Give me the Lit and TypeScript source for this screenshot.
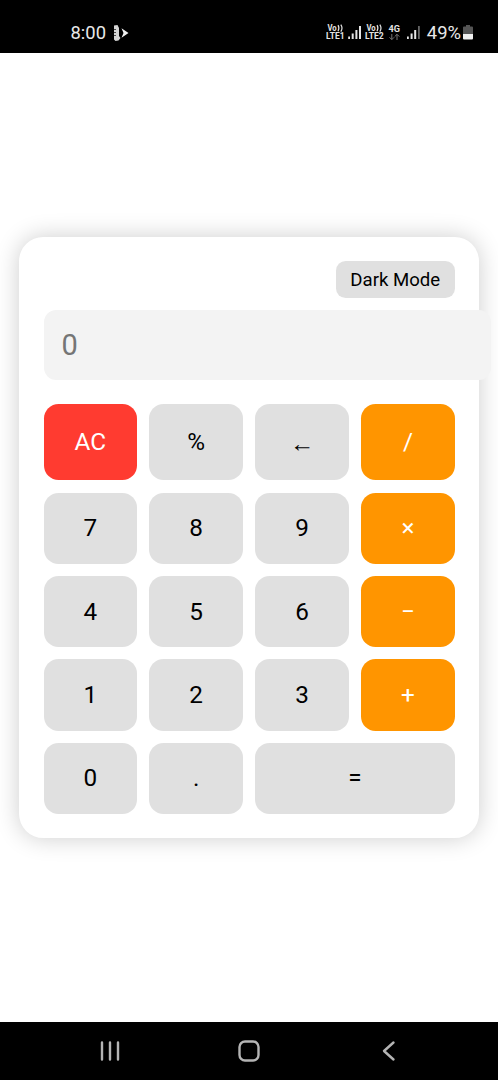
import { LitElement, html, css } from "lit";
import { customElement, state } from "lit/decorators.js";

@customElement("status-bar")
export class StatusBar extends LitElement {

  static styles = css`

    :host{
      display:flex;
      align-items:center;
      justify-content:space-between;
      box-sizing:border-box;
      height:53px;
      padding:12px 25px 0 70.5px;
      background:#000;
      color:#e8e8e8;
      font-family:Roboto,sans-serif;
      font-size:18.4px;
    }

    .side{
      display:flex;
      align-items:center;
    }

    .side svg{
      display:block;
    }

    .app{
      margin-left:7px;
    }

    .network{
      margin-right:4px;
      font-weight:700;
    }

    .battery{
      margin-left:2px;
    }

  `;

  render(){
    return html`

      <div class="side">
        <span>8:00</span>
        <svg class="app" width="16" height="18" viewBox="0 0 16 18">
          <path d="M1 1.5 4.5 1l1.500 3v8l1.500 2L5.500 16.500 2.500 17 1 15.500z" fill="#d4d4d4"/>
          <path d="M1 5.500h2M1 8.500h2M1 11.500h2" stroke="#444" stroke-width="1"/>
          <path d="M8.500 4.300 15.500 9l-7 4.700L10.500 9z" fill="#f2f2f2"/>
        </svg>
      </div>

      <div class="side">
        <svg class="network" width="97" height="18" viewBox="0 0 97 18" fill="#e4e4e4">
          <text x="1.500" y="7.200" font-size="8.500" textLength="9.200" lengthAdjust="spacingAndGlyphs">Vo</text>
          <path d="M12 1.200q1.800 2.700 0 6M14.800 0.700q2.400 3.400 0 7" fill="none" stroke="#e4e4e4" stroke-width="1.200"/>
          <text x="0" y="15.200" font-size="8.500" textLength="18.500" lengthAdjust="spacingAndGlyphs">LTE1</text>
          <path d="M22.200 12.500H24V15h-1.800zM25.700 9.500h2V15h-2zM29.400 6h2v9h-2zM33 2h2v13h-2z"/>
          <text x="40.500" y="7.200" font-size="8.500" textLength="9.200" lengthAdjust="spacingAndGlyphs">Vo</text>
          <path d="M51 1.200q1.800 2.700 0 6M53.800 0.700q2.400 3.400 0 7" fill="none" stroke="#e4e4e4" stroke-width="1.200"/>
          <text x="39" y="15.200" font-size="8.500" textLength="18.800" lengthAdjust="spacingAndGlyphs">LTE2</text>
          <text x="62.500" y="8" font-size="9" textLength="11.500" lengthAdjust="spacingAndGlyphs">4G</text>
          <path d="M65.800 10v5.500M63.500 13.300l2.300 2.300 2.300-2.300M71 16v-5.500M68.700 12.600 71 10.300l2.300 2.300" fill="none" stroke="#777" stroke-width="1"/>
          <path d="M81 12.500h1.800V15H81zM84.600 9.500h2V15h-2zM88.200 6h2v9h-2z"/>
          <path d="M92 2h1.800v13H92z" fill="#666"/>
        </svg>
        <span>49%</span>
        <svg class="battery" width="10" height="15" viewBox="0 0 10 15">
          <path d="M3 0h4v1.500h2q1 0 1 1V9H0V2.500q0-1 1-1h2z" fill="#555"/>
          <path d="M0 9h10v4.500q0 1-1 1H1q-1 0-1-1z" fill="#f0f0f0"/>
        </svg>
      </div>

    `;
  }

}

@customElement("nav-bar")
export class NavBar extends LitElement {

  static styles = css`

    :host{
      display:flex;
      align-items:center;
      justify-content:space-between;
      box-sizing:border-box;
      height:58px;
      padding:0 98px;
      background:#000;
    }

    svg{
      display:block;
      width:24px;
      height:24px;
      fill:none;
      stroke:#b4b4b4;
      stroke-width:2.4;
      stroke-linecap:round;
      stroke-linejoin:round;
    }

  `;

  render(){
    return html`

      <svg viewBox="0 0 24 24"><path d="M4 3.500v17M12 3.500v17M20 3.500v17"/></svg>
      <svg viewBox="0 0 24 24"><rect x="2.500" y="2.500" width="19" height="19" rx="5.500"/></svg>
      <svg viewBox="0 0 24 24"><path d="M17.500 3.500 8 12l9.500 8.500"/></svg>

    `;
  }

}

const keys = [
  { label: "AC", type: "clear" },
  { label: "%", type: "" },
  { label: "←", type: "arrow" },
  { label: "/", type: "operator" },
  { label: "7", type: "" },
  { label: "8", type: "" },
  { label: "9", type: "" },
  { label: "×", type: "operator" },
  { label: "4", type: "" },
  { label: "5", type: "" },
  { label: "6", type: "" },
  { label: "−", type: "operator" },
  { label: "1", type: "" },
  { label: "2", type: "" },
  { label: "3", type: "" },
  { label: "+", type: "operator" },
  { label: "0", type: "" },
  { label: ".", type: "" },
  { label: "=", type: "equal" }
];

@customElement("app-root")
export class AppRoot extends LitElement {

  static styles = css`

    :host{
      display:flex;
      flex-direction:column;
      height:100vh;
      overflow:hidden;
      background:#fff;
      font-family:Roboto,sans-serif;
    }

    main{
      flex:1;
      display:flex;
      align-items:center;
      justify-content:center;
      padding-left:0.6px;
    }

    .calculator{
      box-sizing:border-box;
      width:460px;
      padding:24.3px;
      border-radius:24.3px;
      background:#fff;
      box-shadow:0 0 24px rgba(0,0,0,0.2);
    }

    button{
      border:none;
      padding:0;
      font-family:inherit;
      color:#000;
      background:#e0e0e0;
    }

    .theme{
      display:block;
      width:119.5px;
      height:36.7px;
      margin:0 0 12.2px auto;
      padding-top:1px;
      border-radius:9.7px;
      font-size:18.6px;
    }

    input{
      display:block;
      box-sizing:border-box;
      width:447.5px;
      height:70px;
      margin-bottom:24.3px;
      padding:0 17.8px;
      border:none;
      border-radius:12.2px;
      outline:none;
      background:#f3f3f3;
      color:#000;
      font-family:inherit;
      font-size:29px;
    }

    input::placeholder{
      color:#757575;
    }

    .keys{
      display:grid;
      grid-template-columns:repeat(4,1fr);
      grid-template-rows:76.2px repeat(4,71.2px);
      gap:12.2px;
    }

    .keys button{
      padding:0 0.4px 1px 0;
      border-radius:14.6px;
      font-size:24.3px;
    }

    .keys .clear{
      background:#ff3b30;
      color:#fff;
    }

    .keys .operator{
      background:#ff9500;
      color:#fff;
    }

    .keys .arrow{
      padding:3px 0 0;
      font-family:"Liberation Sans",sans-serif;
      font-size:24.3px;
    }

    .keys .equal{
      grid-column:span 2;
    }

  `;

  @state() value = "";

  press(label: string){
    if(label === "AC"){
      this.value = "";
    } else if(label === "←"){
      this.value = this.value.slice(0, -1);
    } else if(label !== "="){
      this.value += label;
    }
  }

  render(){
    return html`

      <status-bar></status-bar>
      <main>
        <div class="calculator">
          <button class="theme">Dark Mode</button>
          <input placeholder="0" .value=${this.value} readonly>
          <div class="keys">
            ${keys.map(key => html`
              <button class=${key.type} @click=${() => this.press(key.label)}>${key.label}</button>
            `)}
          </div>
        </div>
      </main>
      <nav-bar></nav-bar>

    `;
  }

}
